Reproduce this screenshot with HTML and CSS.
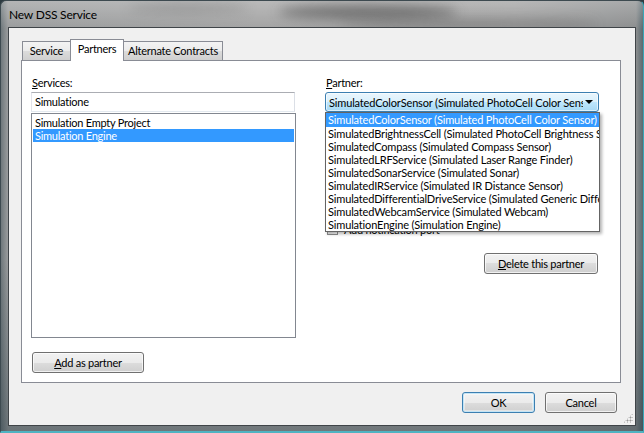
FILE: index.html
```html
<!DOCTYPE html>
<html>
<head>
<meta charset="utf-8">
<link rel="stylesheet" href="styles.css">
</head>
<body>
<div class="window">
  <div class="titlebar">
    <span class="blur b1"></span><span class="blur b2"></span><span class="blur b3"></span>
    <span class="title">New DSS Service</span>
  </div>
  <div class="client">
    <div class="tabs">
      <div class="tab t-service">Service</div>
      <div class="tab t-partners active">Partners</div>
      <div class="tab t-alt">Alternate Contracts</div>
    </div>
    <div class="panel">
      <div class="col col-left">
        <div class="lbl"><u>S</u>ervices:</div>
        <div class="textbox">Simulatione</div>
        <div class="listbox">
          <div class="item">Simulation Empty Project</div>
          <div class="item sel">Simulation Engine</div>
        </div>
        <div class="btn btn-add"><span><u>A</u>dd as partner</span></div>
      </div>
      <div class="col col-right">
        <div class="lbl"><u>P</u>artner:</div>
        <div class="combo-wrap">
          <div class="combo"><span class="combo-text">SimulatedColorSensor (Simulated PhotoCell Color Sensor)</span><span class="arrow"></span></div>
          <div class="dropdown">
            <div class="opt sel">SimulatedColorSensor (Simulated PhotoCell Color Sensor)</div>
            <div class="opt">SimulatedBrightnessCell (Simulated PhotoCell Brightness Sensor)</div>
            <div class="opt">SimulatedCompass (Simulated Compass Sensor)</div>
            <div class="opt">SimulatedLRFService (Simulated Laser Range Finder)</div>
            <div class="opt">SimulatedSonarService (Simulated Sonar)</div>
            <div class="opt">SimulatedIRService (Simulated IR Distance Sensor)</div>
            <div class="opt">SimulatedDifferentialDriveService (Simulated Generic Differential Drive)</div>
            <div class="opt">SimulatedWebcamService (Simulated Webcam)</div>
            <div class="opt">SimulationEngine (Simulation Engine)</div>
          </div>
        </div>
        <div class="check"><span class="box"></span>Add notification port</div>
        <div class="btn btn-del"><span><u>D</u>elete this partner</span></div>
      </div>
    </div>
    <div class="footer">
      <div class="btn btn-ok default"><span>OK</span></div>
      <div class="btn btn-cancel"><span>Cancel</span></div>
    </div>
    <div class="grip"></div>
  </div>
</div>
</body>
</html>
```
FILE: styles.css
```css
html, body {
  margin: 0;
  padding: 0;
  background: #2c3a40;
}
body {
  font-family: "Lato", "Liberation Sans", sans-serif;
  font-size: 11px;
  letter-spacing: -0.25px;
  color: #000;
  white-space: nowrap;
}
.window {
  position: relative;
  width: 644px;
  height: 433px;
  box-sizing: border-box;
  padding: 0 7px 5px 7px;
  display: flex;
  flex-direction: column;
  border-radius: 6px 6px 0 0;
  border: 1px solid #3d4a50;
  border-right-color: #3aa7b8;
  border-bottom: 2px solid #4fb3c2;
  background:
    linear-gradient(180deg, rgba(255,255,255,0.25) 0, rgba(255,255,255,0) 28px),
    linear-gradient(180deg, rgba(0,0,0,0) 60%, rgba(20,40,50,0.35) 100%),
    linear-gradient(90deg, #6f787c 0, #9a9c9d 7px, #a3a3a3 40%, #a0a0a0 80%, #8c8e8f calc(100% - 7px), #5a6a70 100%);
  overflow: hidden;
}
.titlebar {
  position: relative;
  height: 26px;
  flex: none;
}
.title {
  position: absolute;
  left: 1px;
  top: 6px;
  line-height: 15px;
  font-size: 12px;
  letter-spacing: -0.2px;
  color: #000;
}
.blur {
  position: absolute;
  border-radius: 50%;
  filter: blur(6px);
}
.blur.b1 { left: 270px; top: 4px; width: 180px; height: 14px; background: rgba(40,40,40,0.45); }
.blur.b2 { left: 330px; top: 18px; width: 260px; height: 10px; background: rgba(60,60,60,0.3); }
.blur.b3 { left: 120px; top: 2px; width: 120px; height: 10px; background: rgba(80,80,80,0.25); }
.client {
  flex: 1;
  position: relative;
  background: #f0f0f0;
  border: 1px solid #3f4448;
  box-sizing: border-box;
  padding: 11px 14px 0 12px;
  display: flex;
  flex-direction: column;
}
.tabs {
  display: flex;
  align-items: flex-end;
  padding-left: 1px;
  height: 22px;
  position: relative;
  z-index: 2;
}
.tab {
  box-sizing: border-box;
  height: 19px;
  line-height: 18px;
  border: 1px solid #898c95;
  border-bottom: none;
  background: linear-gradient(180deg, #f3f3f3 0, #ebebeb 50%, #dcdcdc 50%, #cfcfcf 100%);
  text-align: center;
  margin-bottom: 1px;
}
.t-service { width: 48px; border-right: none; }
.t-partners { width: 54px; }
.t-alt { width: 99px; border-left: none; }
.tab.active {
  height: 22px;
  line-height: 18px;
  background: #fff;
  margin-bottom: 0;
  padding-bottom: 1px;
}
.panel {
  height: 323px;
  box-sizing: border-box;
  border: 1px solid #898c95;
  background: #fff;
  margin-top: -1px;
  padding: 14px 0 0 9px;
  display: flex;
  gap: 29px;
}
.col {
  display: flex;
  flex-direction: column;
}
.col-left { width: 265px; }
.col-right { width: 274px; }
.lbl {
  line-height: 15px;
  padding-left: 1px;
  margin-bottom: 2px;
}
.textbox {
  box-sizing: border-box;
  height: 20px;
  border: 1px solid #dbdfe6;
  border-top-color: #abadb3;
  border-left-color: #e2e3ea;
  border-right-color: #dbdfe6;
  border-bottom-color: #e3e9ef;
  padding: 1px 3px;
  line-height: 16px;
  width: 264px;
}
.listbox {
  box-sizing: border-box;
  margin-top: 1px;
  height: 225px;
  border: 1px solid #828790;
  padding: 2px 1px;
}
.item {
  height: 13px;
  line-height: 13px;
  padding-left: 2px;
}
.item.sel {
  background: #3399ff;
  color: #fff;
}
.btn {
  box-sizing: border-box;
  height: 21px;
  border: 1px solid #707070;
  border-radius: 3px;
  background: linear-gradient(180deg, #f2f2f2 0, #ebebeb 50%, #dddddd 50%, #cfcfcf 100%);
  box-shadow: inset 0 0 0 1px rgba(255,255,255,0.7);
  display: flex;
  align-items: center;
  justify-content: center;
  line-height: 15px;
}
.btn-add {
  width: 112px;
  margin-top: 14px;
  margin-left: 1px;
}
.combo-wrap {
  position: relative;
}
.combo {
  box-sizing: border-box;
  height: 20px;
  border: 1px solid #3c7fb1;
  border-radius: 3px;
  background: linear-gradient(180deg, #eaf6fd 0, #d9f0fc 50%, #bee6fd 50%, #a7d9f5 100%);
  box-shadow: inset 0 0 0 1px rgba(255,255,255,0.6);
  display: flex;
  align-items: center;
  padding-left: 3px;
  overflow: hidden;
  position: relative;
  letter-spacing: -0.15px;
}
.combo-text {
  overflow: hidden;
  width: 254px;
  line-height: 15px;
}
.arrow {
  position: absolute;
  right: 5px;
  top: 7px;
  width: 0;
  height: 0;
  border-left: 4px solid transparent;
  border-right: 4px solid transparent;
  border-top: 4px solid #000;
}
.dropdown {
  position: absolute;
  left: 0;
  top: 20px;
  width: 275px;
  box-sizing: border-box;
  border: 1px solid #646464;
  background: #fff;
  padding: 0;
  z-index: 5;
  box-shadow: 2px 2px 3px rgba(0,0,0,0.3);
  letter-spacing: -0.15px;
}
.opt {
  height: 13px;
  line-height: 13px;
  padding-left: 2px;
  overflow: hidden;
}
.opt.sel {
  background: #3399ff;
  color: #fff;
  height: 14px;
  line-height: 14px;
}
.check {
  display: flex;
  align-items: center;
  gap: 6px;
  margin-top: 110px;
  line-height: 15px;
  padding-left: 2px;
}
.box {
  width: 11px;
  height: 11px;
  box-sizing: border-box;
  border: 1px solid #8f8f8f;
  background: linear-gradient(135deg, #dcdcdc, #fff);
}
.btn-del {
  width: 114px;
  margin-top: 16px;
  align-self: flex-end;
  margin-right: 1px;
}
.footer {
  display: flex;
  justify-content: flex-end;
  gap: 10px;
  padding-top: 9px;
  padding-right: 4px;
}
.btn-ok { width: 73px; }
.btn-cancel { width: 72px; }
.btn.default {
  border-color: #3c7fb1;
  box-shadow: inset 0 0 0 1px #c4e5f6, inset 0 0 0 2px rgba(255,255,255,0.4);
}
.grip {
  position: absolute;
  right: 2px;
  bottom: 2px;
  width: 10px;
  height: 10px;
  background:
    radial-gradient(circle, #9a9a9a 0.8px, transparent 1.2px) 0 0 / 3px 3px;
  clip-path: polygon(100% 0, 100% 100%, 0 100%);
}
```
